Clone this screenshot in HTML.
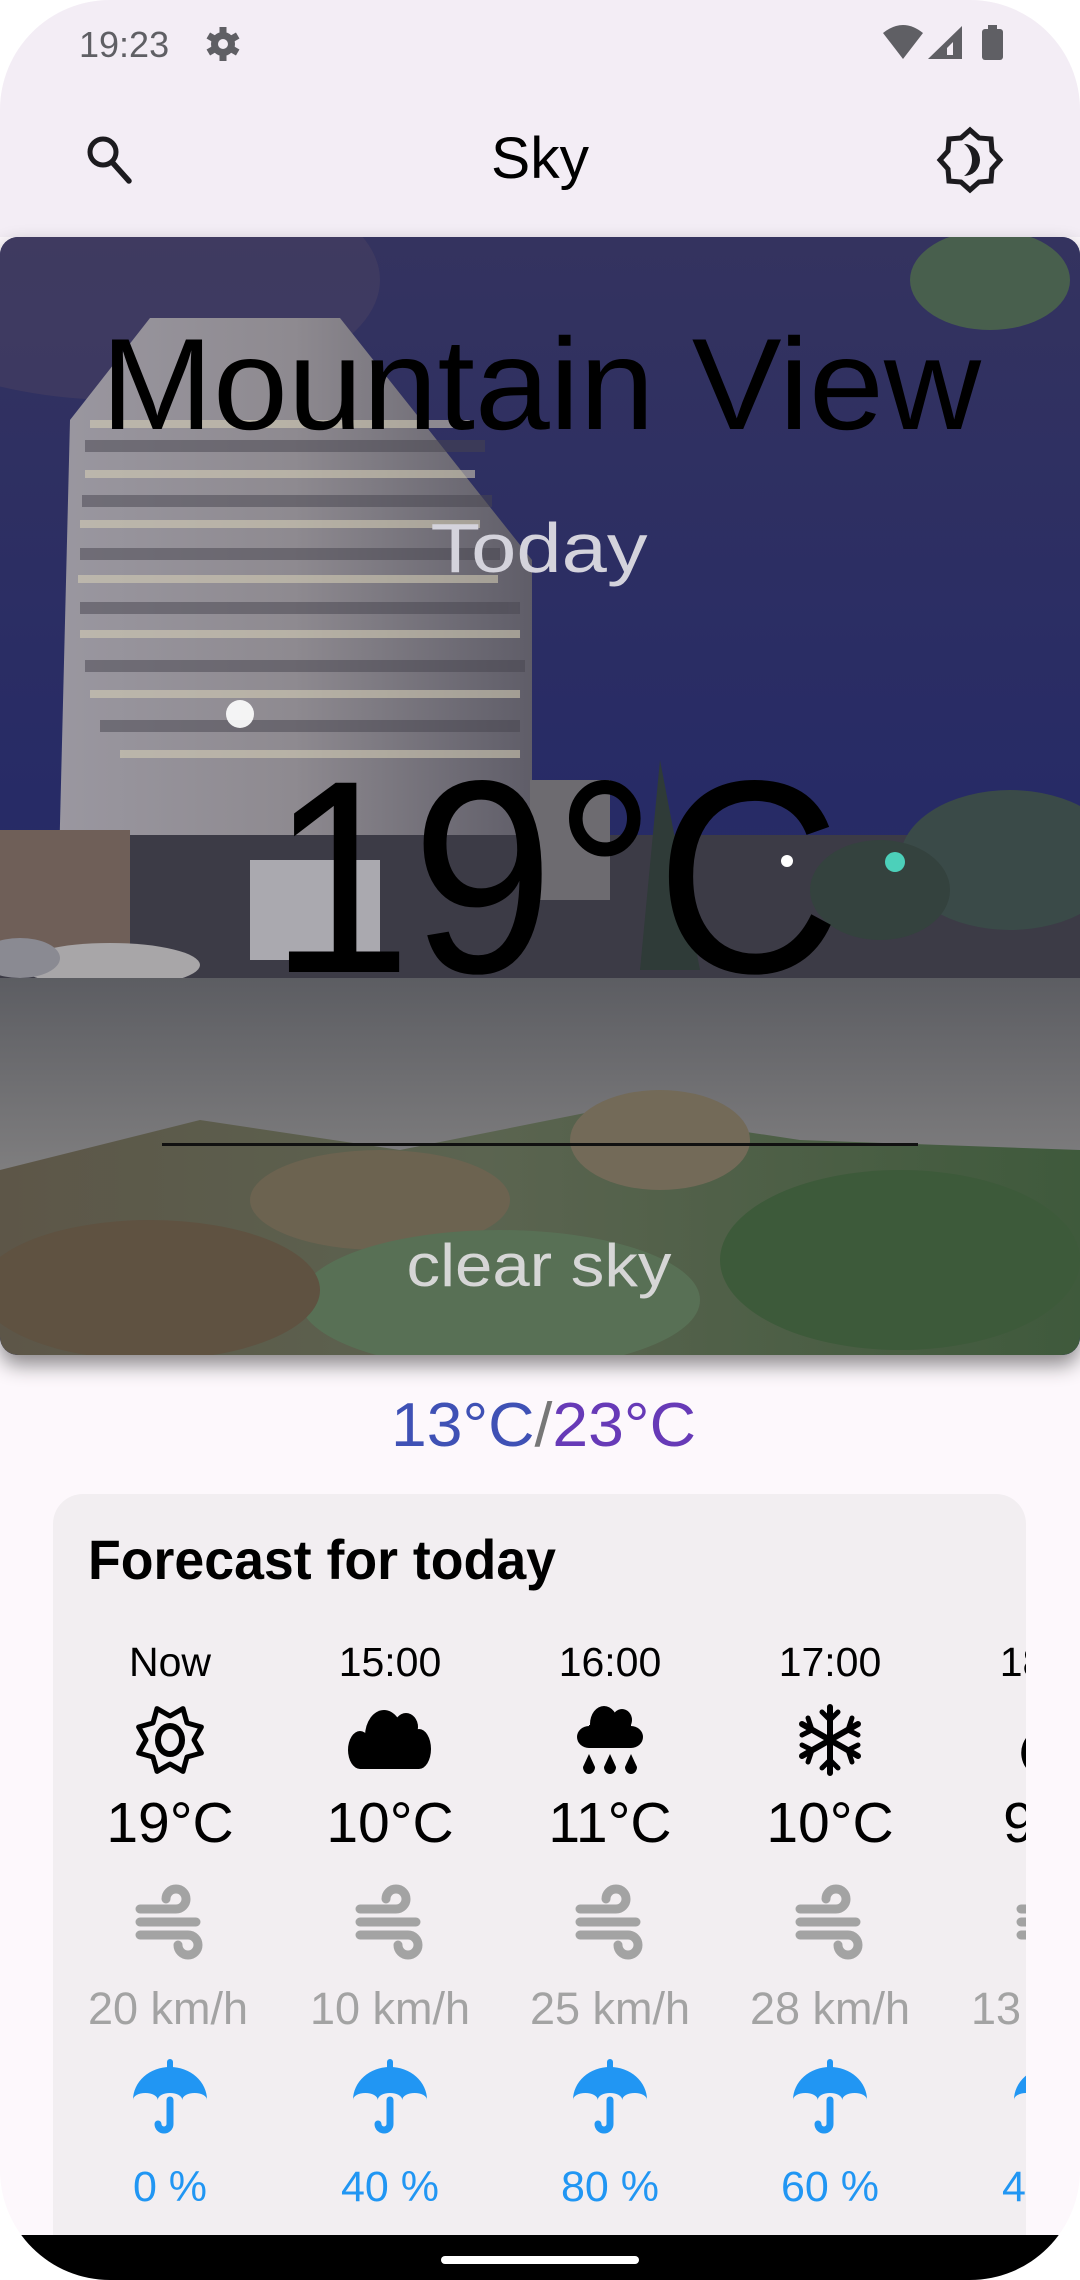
<!DOCTYPE html>
<html><head><meta charset="utf-8">
<style>
html,body{margin:0;padding:0;background:#fff;}
body{width:1080px;height:2280px;overflow:hidden;}
svg{display:block;}
text{font-family:"Liberation Sans",sans-serif;}
</style></head>
<body>
<svg width="1080" height="2280" viewBox="0 0 1080 2280" xmlns="http://www.w3.org/2000/svg">
<defs>
  <clipPath id="screen"><rect x="0" y="0" width="1080" height="2280" rx="110" ry="110"/></clipPath>
  <clipPath id="heroClip"><rect x="0" y="237" width="1080" height="1118" rx="18"/></clipPath>
  <clipPath id="cardClip"><rect x="53" y="1494" width="973" height="760" rx="30"/></clipPath>
  <linearGradient id="sky" x1="0" y1="0" x2="0" y2="1">
    <stop offset="0" stop-color="#34335f"/>
    <stop offset="0.5" stop-color="#272b66"/>
    <stop offset="1" stop-color="#2a3063"/>
  </linearGradient>
  <linearGradient id="bld" x1="0" y1="0" x2="1" y2="0">
    <stop offset="0" stop-color="#9a97a0"/>
    <stop offset="0.5" stop-color="#8e8a90"/>
    <stop offset="1" stop-color="#5f5d68"/>
  </linearGradient>
  <linearGradient id="road" x1="0" y1="0" x2="0" y2="1">
    <stop offset="0" stop-color="#5c5d62"/>
    <stop offset="1" stop-color="#807f80"/>
  </linearGradient>
  <linearGradient id="bush" x1="0" y1="0" x2="1" y2="0">
    <stop offset="0" stop-color="#5d5648"/>
    <stop offset="0.45" stop-color="#5b6450"/>
    <stop offset="1" stop-color="#3f5a3c"/>
  </linearGradient>
  <filter id="sh" x="-10%" y="-10%" width="120%" height="130%"><feDropShadow dx="0" dy="10" stdDeviation="10" flood-color="#000" flood-opacity="0.45"/></filter>
  <g id="wind"><path d="M-30,-12 H6 a10,10 0 1 0 -10,-10 M-30,1 H26 M-30,14 H18 a10,10 0 1 1 -10,10" fill="none" stroke="#a3a3a3" stroke-width="9" stroke-linecap="round"/></g>
  <g id="umb"><path d="M-37,0 A37,33 0 0 1 37,0 A12.3,7 0 0 0 12.3,0 A12.3,7 0 0 0 -12.3,0 A12.3,7 0 0 0 -37,0 Z" fill="#2196f3"/><path d="M0,-33 V-38" stroke="#2196f3" stroke-width="6" stroke-linecap="round"/><path d="M0,0 V24 a6,6 0 0 1 -12,0" fill="none" stroke="#2196f3" stroke-width="7" stroke-linecap="round"/></g>
</defs>

<g clip-path="url(#screen)">
<rect x="0" y="0" width="1080" height="2280" fill="#fdf8fc"/>
<rect x="0" y="0" width="1080" height="237" fill="#f3edf5"/>

<!-- status bar -->
<text x="79" y="57" font-size="36" fill="#5f5f64">19:23</text>
<g transform="translate(223,44)" fill="#5f5f64">
  <circle r="12"/>
  <g stroke="#5f5f64" stroke-width="7"><path d="M0,-17V17M-14.7,-8.5L14.7,8.5M-14.7,8.5L14.7,-8.5"/></g>
  <circle r="5" fill="#f3edf5"/>
</g>
<path d="M883,33 Q903,17 923,33 L903,59 Z" fill="#5f5f64"/>
<path d="M962,26 L962,59 L928,59 Z" fill="#5f5f64"/>
<path d="M953,42 L953,55 L947,55 L947,48 Z" fill="#f3edf5"/>
<rect x="982" y="29" width="21" height="31" rx="3" fill="#5f5f64"/>
<rect x="988" y="25" width="9" height="6" fill="#5f5f64"/>

<!-- top app bar -->
<circle cx="103" cy="152" r="13" fill="none" stroke="#1c1b1f" stroke-width="5"/>
<path d="M112,162 L129,181" stroke="#1c1b1f" stroke-width="5.5" stroke-linecap="round"/>
<text x="540" y="178" font-size="58" text-anchor="middle" fill="#000" textLength="98" lengthAdjust="spacingAndGlyphs">Sky</text>
<g transform="translate(970,160)">
  <path d="M0,-30 L9,-22 L21,-21 L22,-9 L30,0 L22,9 L21,21 L9,22 L0,30 L-9,22 L-21,21 L-22,9 L-30,0 L-22,-9 L-21,-21 L-9,-22 Z" fill="none" stroke="#1c1b1f" stroke-width="5" stroke-linejoin="miter"/>
  <path d="M-6,-16 A16,16 0 0 1 -6,16 A20,20 0 0 0 -6,-16 Z" fill="#1c1b1f"/>
</g>

<!-- hero -->
<g filter="url(#sh)"><rect x="0" y="237" width="1080" height="1118" rx="18" fill="#2a2d60"/></g>
<g clip-path="url(#heroClip)">
  <rect x="0" y="237" width="1080" height="1118" fill="url(#sky)"/>
  <ellipse cx="120" cy="280" rx="260" ry="120" fill="#4a4262" opacity="0.5"/>
  <polygon points="70,420 150,318 340,318 532,560 532,985 56,985" fill="url(#bld)"/>
  <g fill="#d9d2b8" opacity="0.55">
    <rect x="90" y="420" width="380" height="8"/><rect x="85" y="470" width="390" height="8"/>
    <rect x="80" y="520" width="400" height="8"/><rect x="78" y="575" width="420" height="8"/>
    <rect x="80" y="630" width="440" height="8"/><rect x="90" y="690" width="430" height="8"/>
    <rect x="120" y="750" width="400" height="8"/>
  </g>
  <g fill="#47454f" opacity="0.5">
    <rect x="85" y="440" width="400" height="12"/><rect x="82" y="495" width="410" height="12"/>
    <rect x="80" y="548" width="420" height="12"/><rect x="80" y="602" width="440" height="12"/>
    <rect x="85" y="660" width="440" height="12"/><rect x="100" y="720" width="420" height="12"/>
  </g>
  <rect x="0" y="835" width="1080" height="150" fill="#3c3b46"/>
  <rect x="0" y="830" width="130" height="140" fill="#6f5f58"/>
  <rect x="250" y="860" width="130" height="100" fill="#d8d8dc" opacity="0.7"/>
  <rect x="530" y="780" width="80" height="120" fill="#6d6b70"/>
  <polygon points="640,970 660,760 700,970" fill="#2f3b38"/>
  <ellipse cx="1010" cy="860" rx="110" ry="70" fill="#3a4a48"/>
  <ellipse cx="880" cy="890" rx="70" ry="50" fill="#34423e"/>
  <circle cx="240" cy="714" r="14" fill="#fff" opacity="0.9"/>
  <circle cx="895" cy="862" r="10" fill="#4fe0c8" opacity="0.9"/>
  <circle cx="787" cy="861" r="6" fill="#fff"/>
  <ellipse cx="110" cy="965" rx="90" ry="22" fill="#a8a6a8"/>
  <ellipse cx="20" cy="958" rx="40" ry="20" fill="#8a8a92"/>
  <rect x="0" y="978" width="1080" height="200" fill="url(#road)"/>
  <polygon points="0,1170 200,1120 400,1150 600,1110 800,1140 1080,1150 1080,1355 0,1355" fill="url(#bush)"/>
  <ellipse cx="380" cy="1200" rx="130" ry="50" fill="#6c6350"/>
  <ellipse cx="660" cy="1140" rx="90" ry="50" fill="#736a58"/>
  <ellipse cx="500" cy="1300" rx="200" ry="70" fill="#587055"/>
  <ellipse cx="900" cy="1260" rx="180" ry="90" fill="#3d5a3a"/>
  <ellipse cx="150" cy="1290" rx="170" ry="70" fill="#5f5241"/>
  <ellipse cx="990" cy="280" rx="80" ry="50" fill="#4d6a48" opacity="0.8"/>
  <text x="541" y="429" font-size="130" text-anchor="middle" fill="#000" textLength="880" lengthAdjust="spacingAndGlyphs">Mountain View</text>
  <text x="539" y="572" font-size="70" text-anchor="middle" fill="#d4d3dc" textLength="217" lengthAdjust="spacingAndGlyphs">Today</text>
  <text x="555" y="972" font-size="275" text-anchor="middle" fill="#000" textLength="571" lengthAdjust="spacingAndGlyphs">19°C</text>
  <rect x="162" y="1143" width="756" height="3" fill="#111"/>
  <text x="539" y="1286" font-size="60" text-anchor="middle" fill="#d6d6d6" textLength="265" lengthAdjust="spacingAndGlyphs">clear sky</text>
</g>

<text x="391" y="1446" font-size="62" textLength="305" lengthAdjust="spacingAndGlyphs"><tspan fill="#3f51b5">13°C</tspan><tspan fill="#777">/</tspan><tspan fill="#673ab7">23°C</tspan></text>

<!-- card -->
<rect x="53" y="1494" width="973" height="800" rx="30" fill="#f2eef1"/>
<g clip-path="url(#cardClip)">
  <text x="88" y="1579" font-size="56" fill="#000" textLength="468" lengthAdjust="spacingAndGlyphs" style="font-weight:600">Forecast for today</text>
  <g font-size="41" fill="#000" text-anchor="middle">
    <text x="170" y="1676">Now</text><text x="390" y="1676">15:00</text><text x="610" y="1676">16:00</text><text x="830" y="1676">17:00</text><text x="1051" y="1676">18:00</text>
  </g>
  <g transform="translate(170,1740)">
    <path d="M0,-24 L13,-31.4 L17,-17 L31.4,-13 L24,0 L31.4,13 L17,17 L13,31.4 L0,24 L-13,31.4 L-17,17 L-31.4,13 L-24,0 L-31.4,-13 L-17,-17 L-13,-31.4 Z" fill="none" stroke="#000" stroke-width="5" stroke-linejoin="round"/>
    <ellipse rx="12" ry="14" fill="none" stroke="#000" stroke-width="6"/>
  </g>
  <g transform="translate(390,1740)" fill="#000">
    <ellipse cx="-30" cy="10" rx="12" ry="19"/>
    <ellipse cx="-6" cy="-4" rx="19" ry="26"/>
    <ellipse cx="16" cy="-13" rx="12" ry="14"/>
    <ellipse cx="29" cy="9" rx="12" ry="20"/>
    <rect x="-30" y="-5" width="59" height="34"/>
  </g>
  <g transform="translate(610,1740)" fill="#000">
    <ellipse cx="-21" cy="-3" rx="12" ry="11"/>
    <ellipse cx="-6" cy="-16" rx="14" ry="18"/>
    <ellipse cx="12" cy="-20" rx="10" ry="11"/>
    <ellipse cx="21" cy="-3" rx="12" ry="11"/>
    <rect x="-21" y="-15" width="42" height="23"/>
    <path d="M-21,14 L-15,27 A6,7 0 1 1 -27,27 Z M0,14 L6,27 A6,7 0 1 1 -6,27 Z M21,14 L27,27 A6,7 0 1 1 15,27 Z"/>
  </g>
  <g transform="translate(830,1740)" stroke="#000" stroke-width="6" stroke-linecap="round" fill="none">
    <path d="M0,-33V33M-28,-16L28,16M-28,16L28,-16"/>
    <path d="M-8,-28L0,-20L8,-28M-8,28L0,20L8,28M-28,-5L-18,-10L-22,-22M28,5L18,10L22,22M-28,5L-18,10L-22,22M28,-5L18,-10L22,-22" stroke-width="5"/>
  </g>
  <g transform="translate(1051,1745)"><path d="M-24,24 A18,22 0 0 1 -10,-14 A18,20 0 0 1 30,-6 V24 Z" fill="#000"/></g>
  <g font-size="57" fill="#000" text-anchor="middle">
    <text x="170" y="1842">19°C</text><text x="390" y="1842">10°C</text><text x="610" y="1842">11°C</text><text x="830" y="1842">10°C</text><text x="1051" y="1842">9°C</text>
  </g>
  <use href="#wind" x="170" y="1921"/><use href="#wind" x="390" y="1921"/><use href="#wind" x="610" y="1921"/><use href="#wind" x="830" y="1921"/><use href="#wind" x="1051" y="1921"/>
  <g font-size="45" fill="#a3a3a3" text-anchor="middle">
    <text x="168" y="2024">20 km/h</text><text x="390" y="2024">10 km/h</text><text x="610" y="2024">25 km/h</text><text x="830" y="2024">28 km/h</text><text x="1051" y="2024">13 km/h</text>
  </g>
  <use href="#umb" x="170" y="2100"/><use href="#umb" x="390" y="2100"/><use href="#umb" x="610" y="2100"/><use href="#umb" x="830" y="2100"/><use href="#umb" x="1051" y="2100"/>
  <g font-size="43" fill="#2196f3" text-anchor="middle">
    <text x="170" y="2201">0 %</text><text x="390" y="2201">40 %</text><text x="610" y="2201">80 %</text><text x="830" y="2201">60 %</text><text x="1051" y="2201">40 %</text>
  </g>
</g>

<rect x="0" y="2235" width="1080" height="45" fill="#000"/>
<rect x="441" y="2256" width="198" height="8" rx="4" fill="#fff"/>
</g>
</svg>
</body></html>
